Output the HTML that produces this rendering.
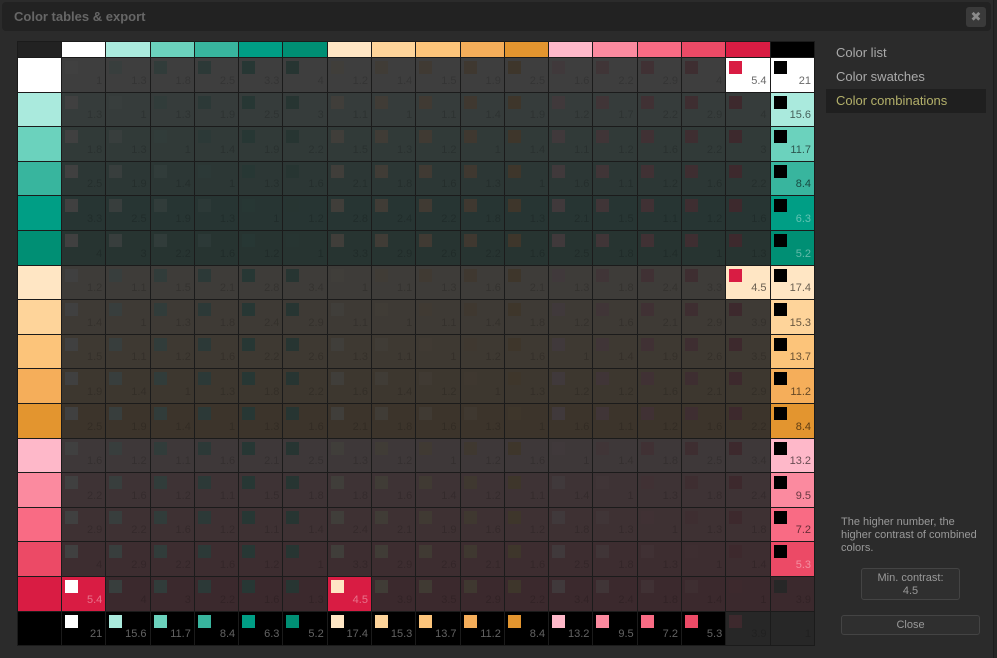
<!DOCTYPE html>
<html><head><meta charset="utf-8"><style>
*{box-sizing:border-box;margin:0;padding:0}
body{width:997px;height:658px;background:#262626;font-family:"Liberation Sans",Arial,sans-serif;position:relative;overflow:hidden}
.modal{position:absolute;left:0;top:0;width:994px;height:658px;background:#2b2b2b;border-right:1px solid #1d1d1d}
.title{position:absolute;left:2px;top:2px;width:989px;height:29px;background:#222;border-radius:4px;color:#666;font-weight:bold;font-size:13px;line-height:29px;padding-left:12px}
.x{position:absolute;left:966px;top:7px;width:20px;height:20px;background:#3a3a3a;border-radius:3px;color:#8a8a8a;font-size:13px;text-align:center;line-height:20px}
table{position:absolute;left:17px;top:41px;width:798px;border-collapse:collapse;table-layout:fixed}
td,th{border:1px solid #1b1b1b;padding:0}
th:first-child{width:44px}
tr.h th{height:16px}
tr.h th:first-child{background:#222}
tbody tr{height:34.6px}
td{position:relative;text-align:right;vertical-align:bottom;font-size:11px;padding:0 3px 5px 0;line-height:12px}
td i{position:absolute;left:3px;top:3px;width:13px;height:13px}
td.d{background:rgba(43,43,43,.91);color:rgba(0,0,0,.16)}
td.d i{box-shadow:inset 0 0 0 13px rgba(43,43,43,.9)}
td.a{color:rgba(0,0,0,.6)}
tr.k td.a{color:rgba(255,255,255,.38)}
td:nth-child(2) i,.h th:nth-child(2){background:#fff}
td:nth-child(3) i,.h th:nth-child(3){background:#aaeadd}
td:nth-child(4) i,.h th:nth-child(4){background:#6bd2bd}
td:nth-child(5) i,.h th:nth-child(5){background:#38b59e}
td:nth-child(6) i,.h th:nth-child(6){background:#009e85}
td:nth-child(7) i,.h th:nth-child(7){background:#008f74}
td:nth-child(8) i,.h th:nth-child(8){background:#ffe6c4}
td:nth-child(9) i,.h th:nth-child(9){background:#fed49a}
td:nth-child(10) i,.h th:nth-child(10){background:#fcc47a}
td:nth-child(11) i,.h th:nth-child(11){background:#f5ae5a}
td:nth-child(12) i,.h th:nth-child(12){background:#e3952f}
td:nth-child(13) i,.h th:nth-child(13){background:#feb8c9}
td:nth-child(14) i,.h th:nth-child(14){background:#fb8a9f}
td:nth-child(15) i,.h th:nth-child(15){background:#f96b84}
td:nth-child(16) i,.h th:nth-child(16){background:#ec4a66}
td:nth-child(17) i,.h th:nth-child(17){background:#d91c43}
td:nth-child(18) i,.h th:nth-child(18){background:#000}
tbody tr:nth-child(1){background:#fff}
tbody tr:nth-child(2){background:#aaeadd}
tbody tr:nth-child(3){background:#6bd2bd}
tbody tr:nth-child(4){background:#38b59e}
tbody tr:nth-child(5){background:#009e85}
tbody tr:nth-child(6){background:#008f74}
tbody tr:nth-child(7){background:#ffe6c4}
tbody tr:nth-child(8){background:#fed49a}
tbody tr:nth-child(9){background:#fcc47a}
tbody tr:nth-child(10){background:#f5ae5a}
tbody tr:nth-child(11){background:#e3952f}
tbody tr:nth-child(12){background:#feb8c9}
tbody tr:nth-child(13){background:#fb8a9f}
tbody tr:nth-child(14){background:#f96b84}
tbody tr:nth-child(15){background:#ec4a66}
tbody tr:nth-child(16){background:#d91c43}
tbody tr:nth-child(17){background:#000}
.menu{position:absolute;left:826px;top:41px;width:160px;font-size:13px;color:#aaa}
.menu div{height:24px;line-height:24px;padding-left:10px}
.menu .sel{background:#1f1f1f;color:#b3b06a}
.info{position:absolute;left:841px;top:516px;width:145px;font-size:11px;line-height:13px;color:#999}
.min{position:absolute;left:861px;top:568px;width:99px;height:32px;border:1px solid #444;border-radius:3px;background:#2f2f2f;color:#999;font-size:11px;line-height:13px;text-align:center;padding-top:3px}
.close{position:absolute;left:841px;top:615px;width:139px;height:20px;border:1px solid #444;border-radius:3px;background:#2f2f2f;color:#999;font-size:11px;line-height:18px;text-align:center}
</style></head><body>
<div class="modal">
<div class="title">Color tables &amp; export</div>
<div class="x">✖</div>
<table>
<thead><tr class="h"><th></th><th></th><th></th><th></th><th></th><th></th><th></th><th></th><th></th><th></th><th></th><th></th><th></th><th></th><th></th><th></th><th></th><th></th></tr></thead>
<tbody>
<tr><th></th><td class="d"><i></i>1</td><td class="d"><i></i>1.3</td><td class="d"><i></i>1.8</td><td class="d"><i></i>2.5</td><td class="d"><i></i>3.3</td><td class="d"><i></i>4</td><td class="d"><i></i>1.2</td><td class="d"><i></i>1.4</td><td class="d"><i></i>1.5</td><td class="d"><i></i>1.9</td><td class="d"><i></i>2.5</td><td class="d"><i></i>1.6</td><td class="d"><i></i>2.2</td><td class="d"><i></i>2.9</td><td class="d"><i></i>4</td><td class="a"><i></i>5.4</td><td class="a"><i></i>21</td></tr>
<tr><th></th><td class="d"><i></i>1.3</td><td class="d"><i></i>1</td><td class="d"><i></i>1.3</td><td class="d"><i></i>1.9</td><td class="d"><i></i>2.5</td><td class="d"><i></i>3</td><td class="d"><i></i>1.1</td><td class="d"><i></i>1</td><td class="d"><i></i>1.1</td><td class="d"><i></i>1.4</td><td class="d"><i></i>1.9</td><td class="d"><i></i>1.2</td><td class="d"><i></i>1.7</td><td class="d"><i></i>2.2</td><td class="d"><i></i>2.9</td><td class="d"><i></i>4</td><td class="a"><i></i>15.6</td></tr>
<tr><th></th><td class="d"><i></i>1.8</td><td class="d"><i></i>1.3</td><td class="d"><i></i>1</td><td class="d"><i></i>1.4</td><td class="d"><i></i>1.9</td><td class="d"><i></i>2.2</td><td class="d"><i></i>1.5</td><td class="d"><i></i>1.3</td><td class="d"><i></i>1.2</td><td class="d"><i></i>1</td><td class="d"><i></i>1.4</td><td class="d"><i></i>1.1</td><td class="d"><i></i>1.2</td><td class="d"><i></i>1.6</td><td class="d"><i></i>2.2</td><td class="d"><i></i>3</td><td class="a"><i></i>11.7</td></tr>
<tr><th></th><td class="d"><i></i>2.5</td><td class="d"><i></i>1.9</td><td class="d"><i></i>1.4</td><td class="d"><i></i>1</td><td class="d"><i></i>1.3</td><td class="d"><i></i>1.6</td><td class="d"><i></i>2.1</td><td class="d"><i></i>1.8</td><td class="d"><i></i>1.6</td><td class="d"><i></i>1.3</td><td class="d"><i></i>1</td><td class="d"><i></i>1.6</td><td class="d"><i></i>1.1</td><td class="d"><i></i>1.2</td><td class="d"><i></i>1.6</td><td class="d"><i></i>2.2</td><td class="a"><i></i>8.4</td></tr>
<tr class="k"><th></th><td class="d"><i></i>3.3</td><td class="d"><i></i>2.5</td><td class="d"><i></i>1.9</td><td class="d"><i></i>1.3</td><td class="d"><i></i>1</td><td class="d"><i></i>1.2</td><td class="d"><i></i>2.8</td><td class="d"><i></i>2.4</td><td class="d"><i></i>2.2</td><td class="d"><i></i>1.8</td><td class="d"><i></i>1.3</td><td class="d"><i></i>2.1</td><td class="d"><i></i>1.5</td><td class="d"><i></i>1.1</td><td class="d"><i></i>1.2</td><td class="d"><i></i>1.6</td><td class="a"><i></i>6.3</td></tr>
<tr class="k"><th></th><td class="d"><i></i>4</td><td class="d"><i></i>3</td><td class="d"><i></i>2.2</td><td class="d"><i></i>1.6</td><td class="d"><i></i>1.2</td><td class="d"><i></i>1</td><td class="d"><i></i>3.3</td><td class="d"><i></i>2.9</td><td class="d"><i></i>2.6</td><td class="d"><i></i>2.2</td><td class="d"><i></i>1.6</td><td class="d"><i></i>2.5</td><td class="d"><i></i>1.8</td><td class="d"><i></i>1.4</td><td class="d"><i></i>1</td><td class="d"><i></i>1.3</td><td class="a"><i></i>5.2</td></tr>
<tr><th></th><td class="d"><i></i>1.2</td><td class="d"><i></i>1.1</td><td class="d"><i></i>1.5</td><td class="d"><i></i>2.1</td><td class="d"><i></i>2.8</td><td class="d"><i></i>3.4</td><td class="d"><i></i>1</td><td class="d"><i></i>1.1</td><td class="d"><i></i>1.3</td><td class="d"><i></i>1.6</td><td class="d"><i></i>2.1</td><td class="d"><i></i>1.3</td><td class="d"><i></i>1.8</td><td class="d"><i></i>2.4</td><td class="d"><i></i>3.3</td><td class="a"><i></i>4.5</td><td class="a"><i></i>17.4</td></tr>
<tr><th></th><td class="d"><i></i>1.4</td><td class="d"><i></i>1</td><td class="d"><i></i>1.3</td><td class="d"><i></i>1.8</td><td class="d"><i></i>2.4</td><td class="d"><i></i>2.9</td><td class="d"><i></i>1.1</td><td class="d"><i></i>1</td><td class="d"><i></i>1.1</td><td class="d"><i></i>1.4</td><td class="d"><i></i>1.8</td><td class="d"><i></i>1.2</td><td class="d"><i></i>1.6</td><td class="d"><i></i>2.1</td><td class="d"><i></i>2.9</td><td class="d"><i></i>3.9</td><td class="a"><i></i>15.3</td></tr>
<tr><th></th><td class="d"><i></i>1.5</td><td class="d"><i></i>1.1</td><td class="d"><i></i>1.2</td><td class="d"><i></i>1.6</td><td class="d"><i></i>2.2</td><td class="d"><i></i>2.6</td><td class="d"><i></i>1.3</td><td class="d"><i></i>1.1</td><td class="d"><i></i>1</td><td class="d"><i></i>1.2</td><td class="d"><i></i>1.6</td><td class="d"><i></i>1</td><td class="d"><i></i>1.4</td><td class="d"><i></i>1.9</td><td class="d"><i></i>2.6</td><td class="d"><i></i>3.5</td><td class="a"><i></i>13.7</td></tr>
<tr><th></th><td class="d"><i></i>1.9</td><td class="d"><i></i>1.4</td><td class="d"><i></i>1</td><td class="d"><i></i>1.3</td><td class="d"><i></i>1.8</td><td class="d"><i></i>2.2</td><td class="d"><i></i>1.6</td><td class="d"><i></i>1.4</td><td class="d"><i></i>1.2</td><td class="d"><i></i>1</td><td class="d"><i></i>1.3</td><td class="d"><i></i>1.2</td><td class="d"><i></i>1.2</td><td class="d"><i></i>1.6</td><td class="d"><i></i>2.1</td><td class="d"><i></i>2.9</td><td class="a"><i></i>11.2</td></tr>
<tr><th></th><td class="d"><i></i>2.5</td><td class="d"><i></i>1.9</td><td class="d"><i></i>1.4</td><td class="d"><i></i>1</td><td class="d"><i></i>1.3</td><td class="d"><i></i>1.6</td><td class="d"><i></i>2.1</td><td class="d"><i></i>1.8</td><td class="d"><i></i>1.6</td><td class="d"><i></i>1.3</td><td class="d"><i></i>1</td><td class="d"><i></i>1.6</td><td class="d"><i></i>1.1</td><td class="d"><i></i>1.2</td><td class="d"><i></i>1.6</td><td class="d"><i></i>2.2</td><td class="a"><i></i>8.4</td></tr>
<tr><th></th><td class="d"><i></i>1.6</td><td class="d"><i></i>1.2</td><td class="d"><i></i>1.1</td><td class="d"><i></i>1.6</td><td class="d"><i></i>2.1</td><td class="d"><i></i>2.5</td><td class="d"><i></i>1.3</td><td class="d"><i></i>1.2</td><td class="d"><i></i>1</td><td class="d"><i></i>1.2</td><td class="d"><i></i>1.6</td><td class="d"><i></i>1</td><td class="d"><i></i>1.4</td><td class="d"><i></i>1.8</td><td class="d"><i></i>2.5</td><td class="d"><i></i>3.4</td><td class="a"><i></i>13.2</td></tr>
<tr><th></th><td class="d"><i></i>2.2</td><td class="d"><i></i>1.6</td><td class="d"><i></i>1.2</td><td class="d"><i></i>1.1</td><td class="d"><i></i>1.5</td><td class="d"><i></i>1.8</td><td class="d"><i></i>1.8</td><td class="d"><i></i>1.6</td><td class="d"><i></i>1.4</td><td class="d"><i></i>1.2</td><td class="d"><i></i>1.1</td><td class="d"><i></i>1.4</td><td class="d"><i></i>1</td><td class="d"><i></i>1.3</td><td class="d"><i></i>1.8</td><td class="d"><i></i>2.4</td><td class="a"><i></i>9.5</td></tr>
<tr><th></th><td class="d"><i></i>2.9</td><td class="d"><i></i>2.2</td><td class="d"><i></i>1.6</td><td class="d"><i></i>1.2</td><td class="d"><i></i>1.1</td><td class="d"><i></i>1.4</td><td class="d"><i></i>2.4</td><td class="d"><i></i>2.1</td><td class="d"><i></i>1.9</td><td class="d"><i></i>1.6</td><td class="d"><i></i>1.2</td><td class="d"><i></i>1.8</td><td class="d"><i></i>1.3</td><td class="d"><i></i>1</td><td class="d"><i></i>1.3</td><td class="d"><i></i>1.8</td><td class="a"><i></i>7.2</td></tr>
<tr class="k"><th></th><td class="d"><i></i>4</td><td class="d"><i></i>2.9</td><td class="d"><i></i>2.2</td><td class="d"><i></i>1.6</td><td class="d"><i></i>1.2</td><td class="d"><i></i>1</td><td class="d"><i></i>3.3</td><td class="d"><i></i>2.9</td><td class="d"><i></i>2.6</td><td class="d"><i></i>2.1</td><td class="d"><i></i>1.6</td><td class="d"><i></i>2.5</td><td class="d"><i></i>1.8</td><td class="d"><i></i>1.3</td><td class="d"><i></i>1</td><td class="d"><i></i>1.4</td><td class="a"><i></i>5.3</td></tr>
<tr class="k"><th></th><td class="a"><i></i>5.4</td><td class="d"><i></i>4</td><td class="d"><i></i>3</td><td class="d"><i></i>2.2</td><td class="d"><i></i>1.6</td><td class="d"><i></i>1.3</td><td class="a"><i></i>4.5</td><td class="d"><i></i>3.9</td><td class="d"><i></i>3.5</td><td class="d"><i></i>2.9</td><td class="d"><i></i>2.2</td><td class="d"><i></i>3.4</td><td class="d"><i></i>2.4</td><td class="d"><i></i>1.8</td><td class="d"><i></i>1.4</td><td class="d"><i></i>1</td><td class="d"><i></i>3.9</td></tr>
<tr class="k"><th></th><td class="a"><i></i>21</td><td class="a"><i></i>15.6</td><td class="a"><i></i>11.7</td><td class="a"><i></i>8.4</td><td class="a"><i></i>6.3</td><td class="a"><i></i>5.2</td><td class="a"><i></i>17.4</td><td class="a"><i></i>15.3</td><td class="a"><i></i>13.7</td><td class="a"><i></i>11.2</td><td class="a"><i></i>8.4</td><td class="a"><i></i>13.2</td><td class="a"><i></i>9.5</td><td class="a"><i></i>7.2</td><td class="a"><i></i>5.3</td><td class="d"><i></i>3.9</td><td class="d"><i></i>1</td></tr>
</tbody></table>
<div class="menu"><div>Color list</div><div>Color swatches</div><div class="sel">Color combinations</div></div>
<div class="info">The higher number, the higher contrast of combined colors.</div>
<div class="min">Min. contrast:<br>4.5</div>
<div class="close">Close</div>
</div>
</body></html>
